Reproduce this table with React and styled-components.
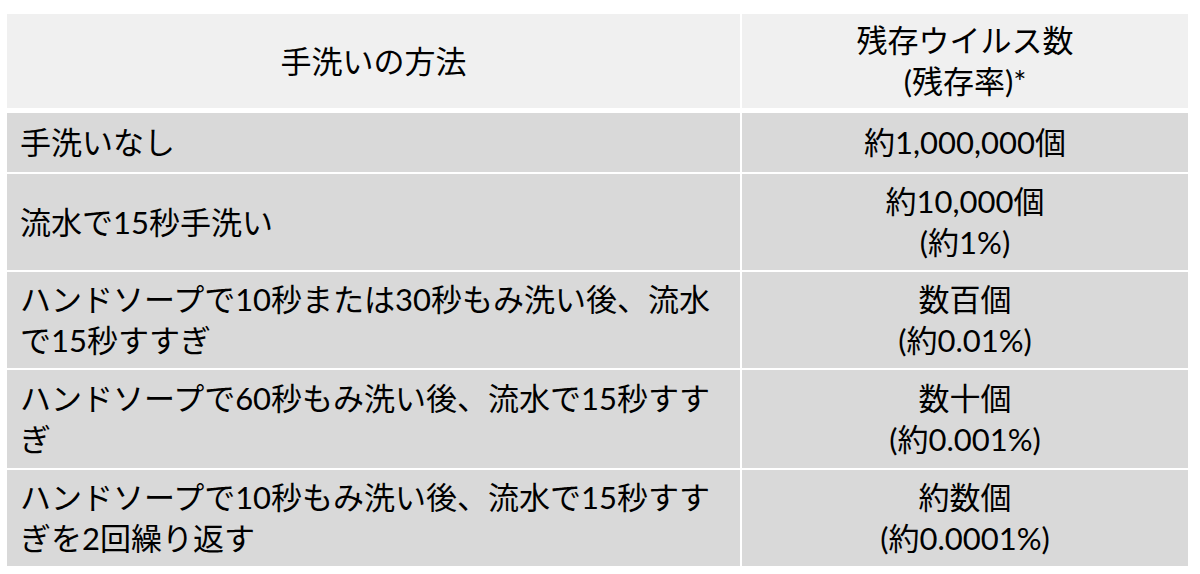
import React from 'react';
import styled, { createGlobalStyle } from 'styled-components';

const GlobalStyle = createGlobalStyle`
    html, body {
        margin: 0;
        padding: 0;
        background: #ffffff;
    }
    body {
        font-family: "Lato", "Noto Sans CJK JP", sans-serif;
        color: #000;
    }
`;

const Page = styled.div`
    padding: 14px 0 0 7px;
`;

const Table = styled.div`
    width: 1181px;
    display: flex;
    flex-direction: column;
    gap: 2px;
`;

const Row = styled.div`
    display: grid;
    grid-template-columns: 733px 446px;
    column-gap: 2px;
    height: ${p => p.h}px;
    margin-bottom: ${p => (p.head ? 3 : 0)}px;
`;

const Cell = styled.div`
    background: ${p => (p.head ? '#f0f0f0' : '#d9d9d9')};
    display: flex;
    flex-direction: column;
    justify-content: center;
    align-items: ${p => (p.center ? 'center' : 'flex-start')};
    text-align: ${p => (p.center ? 'center' : 'left')};
    padding: 0 13px;
    font-size: 31px;
    line-height: 41px;
    white-space: nowrap;
`;

const rows = [
    { h: 59, method: ['手洗いなし'], result: ['約1,000,000個'] },
    { h: 96, method: ['流水で15秒手洗い'], result: ['約10,000個', '(約1%)'] },
    { h: 96, method: ['ハンドソープで10秒または30秒もみ洗い後、流水', 'で15秒すすぎ'], result: ['数百個', '(約0.01%)'] },
    { h: 98, method: ['ハンドソープで60秒もみ洗い後、流水で15秒すす', 'ぎ'], result: ['数十個', '(約0.001%)'] },
    { h: 96, method: ['ハンドソープで10秒もみ洗い後、流水で15秒すす', 'ぎを2回繰り返す'], result: ['約数個', '(約0.0001%)'] },
];

const Lines = ({ lines }) => lines.map((l, i) => <div key={i}>{l}</div>);

const App = () => (
    <Page>
        <GlobalStyle />
        <Table>
            <Row h={94} head>
                <Cell head center>手洗いの方法</Cell>
                <Cell head center>
                    <Lines lines={['残存ウイルス数', '(残存率)*']} />
                </Cell>
            </Row>
            {rows.map((r, i) => (
                <Row key={i} h={r.h}>
                    <Cell><Lines lines={r.method} /></Cell>
                    <Cell center><Lines lines={r.result} /></Cell>
                </Row>
            ))}
        </Table>
    </Page>
);

export default App;
